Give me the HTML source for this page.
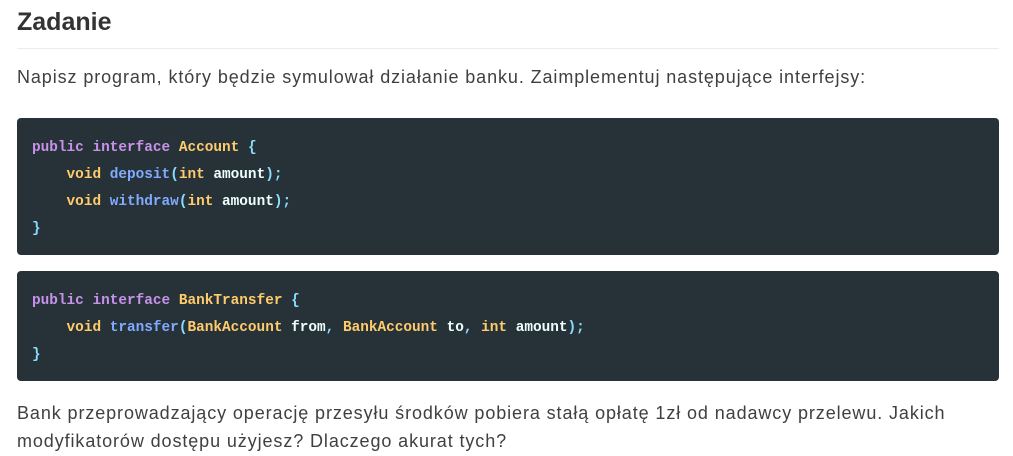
<!DOCTYPE html>
<html><head><style>
body{margin:0;background:#fff;width:1013px;height:456px;overflow:hidden;font-family:"Liberation Sans",sans-serif;color:#404040}
h2{position:absolute;left:17px;top:4px;margin:0;font-size:25px;font-weight:bold;color:#333;line-height:36px}
.hr{position:absolute;left:17px;top:48px;width:982px;height:1px;background:#eaecef}
p{position:absolute;left:17px;margin:0;font-size:18px;line-height:28px;width:930px;letter-spacing:0.9px}
.code{position:absolute;left:17px;width:982px;background:#263238;border-radius:4px;box-sizing:border-box;padding:17px 15px 11px;font-family:"Liberation Mono",monospace;font-size:14.4px;line-height:27px;color:#eeffff;white-space:pre;font-weight:bold}
.k{color:#c792ea}.t{color:#ffcb6b}.f{color:#82aaff}.p{color:#89ddff}
</style></head><body>
<h2>Zadanie</h2>
<div class="hr"></div>
<p style="top:63px">Napisz program, który będzie symulował działanie banku. Zaimplementuj następujące interfejsy:</p>
<div class="code" style="top:118px;height:137px"><span class="k">public</span> <span class="k">interface</span> <span class="t">Account</span> <span class="p">{</span>
    <span class="t">void</span> <span class="f">deposit</span><span class="p">(</span><span class="t">int</span> amount<span class="p">);</span>
    <span class="t">void</span> <span class="f">withdraw</span><span class="p">(</span><span class="t">int</span> amount<span class="p">);</span>
<span class="p">}</span></div>
<div class="code" style="top:271px;height:110px"><span class="k">public</span> <span class="k">interface</span> <span class="t">BankTransfer</span> <span class="p">{</span>
    <span class="t">void</span> <span class="f">transfer</span><span class="p">(</span><span class="t">BankAccount</span> from<span class="p">,</span> <span class="t">BankAccount</span> to<span class="p">,</span> <span class="t">int</span> amount<span class="p">);</span>
<span class="p">}</span></div>
<p style="top:399px">Bank przeprowadzający operację przesyłu środków pobiera stałą opłatę 1zł od nadawcy przelewu. Jakich modyfikatorów dostępu użyjesz? Dlaczego akurat tych?</p>
</body></html>
